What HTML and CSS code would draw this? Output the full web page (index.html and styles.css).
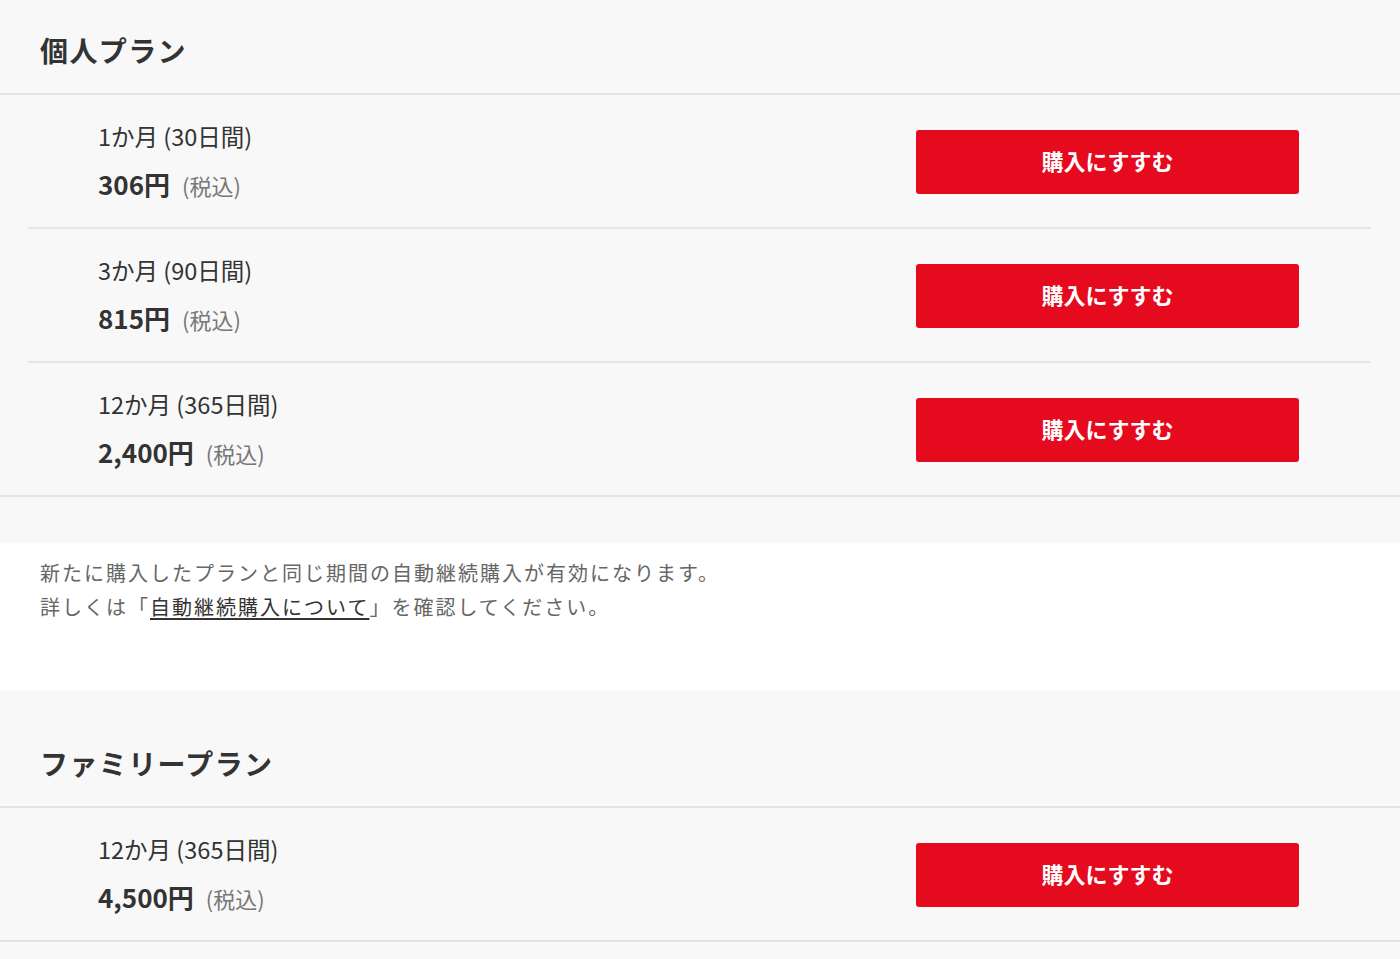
FILE: index.html
```html
<!DOCTYPE html>
<html lang="ja">
<head>
    <meta charset="UTF-8">
    <meta name="viewport" content="width=device-width, initial-scale=1.0">
    <title>プラン選択</title>
    <link rel="stylesheet" href="styles.css">
</head>
<body>
    <section class="plan">
        <h2 class="plan-title">個人プラン</h2>
        <ul class="plan-list">
            <li class="plan-item">
                <div class="plan-info">
                    <p class="plan-period">1か月 (30日間)</p>
                    <p class="plan-price">306円<span class="tax">(税込)</span></p>
                </div>
                <button class="buy-btn">購入にすすむ</button>
            </li>
            <li class="plan-item">
                <div class="plan-info">
                    <p class="plan-period">3か月 (90日間)</p>
                    <p class="plan-price">815円<span class="tax">(税込)</span></p>
                </div>
                <button class="buy-btn">購入にすすむ</button>
            </li>
            <li class="plan-item">
                <div class="plan-info">
                    <p class="plan-period">12か月 (365日間)</p>
                    <p class="plan-price">2,400円<span class="tax">(税込)</span></p>
                </div>
                <button class="buy-btn">購入にすすむ</button>
            </li>
        </ul>
    </section>

    <div class="note">
        <p>新たに購入したプランと同じ期間の自動継続購入が有効になります。</p>
        <p>詳しくは「<a href="#">自動継続購入について</a>」を確認してください。</p>
    </div>

    <section class="plan plan-family">
        <h2 class="plan-title">ファミリープラン</h2>
        <ul class="plan-list">
            <li class="plan-item">
                <div class="plan-info">
                    <p class="plan-period">12か月 (365日間)</p>
                    <p class="plan-price">4,500円<span class="tax">(税込)</span></p>
                </div>
                <button class="buy-btn">購入にすすむ</button>
            </li>
        </ul>
    </section>
</body>
</html>
```

FILE: styles.css
```css
body {
    margin: 0;
    font-family: "Noto Sans CJK JP", "Noto Sans", sans-serif;
    background-color: #f8f8f8;
    color: #333;
}

p {
    margin: 0;
}

.plan {
    background-color: #f8f8f8;
    padding-bottom: 46px;
}

.plan-family {
    padding-top: 22px;
}

.plan-title {
    margin: 0;
    padding: 30px 40px 23px;
    font-size: 28px;
    line-height: 40px;
    font-weight: bold;
    letter-spacing: 1.4px;
    border-bottom: 2px solid #e3e3e3;
}

.plan-list {
    list-style: none;
    margin: 0;
    padding: 0;
    border-bottom: 2px solid #e3e3e3;
}

.plan-item {
    display: flex;
    justify-content: space-between;
    align-items: center;
    margin: 0 29px 0 28px;
    padding: 25px 72px 23px 70px;
}

.plan-item + .plan-item {
    border-top: 2px solid #e6e6e6;
}

.plan-period {
    font-size: 23.5px;
    line-height: 32px;
}

.plan-price {
    margin-top: 12px;
    font-size: 26px;
    line-height: 40px;
    font-weight: bold;
}

.tax {
    margin-left: 12px;
    font-size: 22px;
    line-height: 1;
    font-weight: normal;
    color: #777;
}

.buy-btn {
    width: 383px;
    height: 64px;
    margin-top: -1px;
    padding: 0 0 4px;
    background-color: #e60a1f;
    color: #fff;
    border: none;
    border-radius: 3px;
    font-family: inherit;
    font-size: 22px;
    font-weight: bold;
    cursor: pointer;
}

.buy-btn:hover {
    background-color: #c8081a;
}

.note {
    background-color: #fff;
    padding: 13px 40px 67px;
    font-size: 20px;
    line-height: 34px;
    letter-spacing: 2px;
    color: #666;
}

.note a {
    color: #333;
    text-underline-offset: 3px;
}
```
